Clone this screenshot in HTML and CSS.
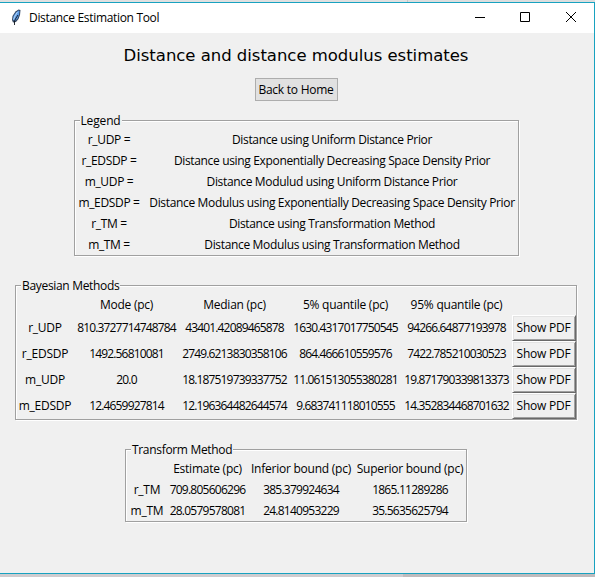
FILE: index.html
```html
<!DOCTYPE html>
<html lang="en">
<head>
<meta charset="utf-8">
<title>Distance Estimation Tool</title>
<link rel="stylesheet" href="styles.css">
</head>
<body>
<div class="backdrop-top"></div>
<main class="window">
  <header class="titlebar">
    <svg class="feather" width="12" height="18" viewBox="0 0 12 18">
      <path d="M8.500 .500 L10.500 1 L10 6 L8.500 10 L6 13 L3 13.500 L2 11 L2.500 7 L5.500 2.500 Z" fill="#33455f"/>
      <path d="M8.500 1.500 L9.500 2 L9 6 L7.500 9.500 L5 12 L3 11 L3.500 7 L6 3.500 Z" fill="#5b9ae6"/>
      <path d="M7.500 3 L5 7 L3.500 10.500" stroke="#b4d6f7" fill="none"/>
      <path d="M8 6 L6 9 L4.500 12 L4.500 16" stroke="#10151c" stroke-width=".9" fill="none"/>
    </svg>
    <span class="caption">Distance Estimation Tool</span>
    <svg class="controls" width="102" height="12" viewBox="0 0 102 12" fill="none" stroke="#000">
      <path d="M0 5.500H10"/>
      <path d="M45.500 .500h9v9h-9z"/>
      <path d="M91 0L101 10M101 0L91 10"/>
    </svg>
  </header>
  <section class="content">
    <h1>Distance and distance modulus estimates</h1>
    <button class="home">Back to Home</button>

    <section class="group legend">
      <h2>Legend</h2>
      <div>r_UDP =</div><div>Distance using Uniform Distance Prior</div>
      <div>r_EDSDP =</div><div>Distance using Exponentially Decreasing Space Density Prior</div>
      <div>m_UDP =</div><div>Distance Modulud using Uniform Distance Prior</div>
      <div>m_EDSDP =</div><div>Distance Modulus using Exponentially Decreasing Space Density Prior</div>
      <div>r_TM =</div><div>Distance using Transformation Method</div>
      <div>m_TM =</div><div>Distance Modulus using Transformation Method</div>
    </section>

    <section class="group bayes">
      <h2>Bayesian Methods</h2>
      <div></div><div>Mode (pc)</div><div>Median (pc)</div><div>5% quantile (pc)</div><div>95% quantile (pc)</div><div></div>
      <div>r_UDP</div><div class="num">810.3727714748784</div><div class="num">43401.42089465878</div><div class="num">1630.4317017750545</div><div class="num">94266.64877193978</div><button class="pdf">Show PDF</button>
      <div>r_EDSDP</div><div class="num">1492.56810081</div><div class="num">2749.6213830358106</div><div class="num">864.466610559576</div><div class="num">7422.785210030523</div><button class="pdf">Show PDF</button>
      <div>m_UDP</div><div class="num">20.0</div><div class="num">18.187519739337752</div><div class="num">11.061513055380281</div><div class="num">19.871790339813373</div><button class="pdf">Show PDF</button>
      <div>m_EDSDP</div><div class="num">12.4659927814</div><div class="num">12.196364482644574</div><div class="num">9.683741118010555</div><div class="num">14.352834468701632</div><button class="pdf">Show PDF</button>
    </section>

    <section class="group transform">
      <h2>Transform Method</h2>
      <div></div><div>Estimate (pc)</div><div>Inferior bound (pc)</div><div>Superior bound (pc)</div>
      <div>r_TM</div><div class="num">709.805606296</div><div class="num">385.379924634</div><div class="num">1865.11289286</div>
      <div>m_TM</div><div class="num">28.0579578081</div><div class="num">24.8140953229</div><div class="num">35.5635625794</div>
    </section>
  </section>
</main>
<div class="backdrop-bottom"></div>
</body>
</html>
```
FILE: styles.css
```css
* { box-sizing: border-box; }
body {
  margin: 0;
  width: 600px;
  height: 577px;
  overflow: hidden;
  background: #fff;
  color: #000;
  font: 12px/16px "Open Sans", "Noto Sans", sans-serif;
  letter-spacing: -0.24px;
}
.backdrop-top {
  width: 595px;
  height: 2px;
  background: linear-gradient(90deg, #e0e0e0 407px, #c4c8c8 407px 408px, #dcdede 408px);
}
.backdrop-bottom {
  width: 595px;
  height: 3px;
  background: linear-gradient(90deg, #cfcccf 403px, #bfbbbd 403px);
}
.window {
  width: 595px;
  height: 572px;
  border: solid #18a2c0;
  border-width: 1px 1px 1px 0;
  background: #f0f0f0;
}
.titlebar {
  display: flex;
  align-items: center;
  height: 30px;
  padding: 0 17px 0 10px;
  background: #fff;
}
.feather { margin-right: 7px; }
.caption { letter-spacing: -0.32px; }
.controls { margin-left: auto; }
.content {
  display: flex;
  flex-direction: column;
  align-items: center;
  width: 592px;
}
h1 {
  margin: 13px 0 0;
  font: 16.5px/20px "DejaVu Sans", sans-serif;
  letter-spacing: -0.03px;
}
button {
  padding: 0;
  font: inherit;
  color: inherit;
  letter-spacing: inherit;
  white-space: nowrap;
}
.home {
  width: 83px;
  height: 23px;
  margin-top: 12px;
  border: 1px solid #adadad;
  background: #e1e1e1;
}
.group {
  position: relative;
  display: grid;
  justify-items: center;
  align-items: center;
  border: 1px solid #a0a0a0;
  box-shadow: 1px 1px 0 #fff, inset 1px 1px 0 #fff;
  white-space: nowrap;
}
h2 {
  position: absolute;
  left: 5px;
  top: -8px;
  margin: 0;
  padding: 0 1px;
  background: #f0f0f0;
  font: inherit;
  letter-spacing: -0.32px;
}
.legend h2 { letter-spacing: -0.15px; }
.legend {
  width: 445px;
  height: 136px;
  margin-top: 19px;
  padding: 8px 0 0 1px;
  grid-template-columns: 67px 1fr;
  grid-auto-rows: 21px;
  letter-spacing: -0.34px;
}
.legend div:nth-of-type(even) { padding-left: 4px; }
.bayes {
  width: 562px;
  height: 135px;
  margin-top: 29px;
  padding-top: 9px;
  grid-template-columns: 58px 105px 111px 111px 111px 63px;
  grid-template-rows: 20px repeat(4, 26px);
}
.transform {
  width: 342px;
  height: 73px;
  margin-top: 29px;
  padding-top: 8px;
  grid-template-columns: 42px 79px 108px 110px;
  grid-auto-rows: 21px;
}
.num { letter-spacing: -0.84px; }
.transform .num { letter-spacing: -0.75px; }
.pdf {
  width: 64px;
  height: 26px;
  border: 1px solid;
  border-color: #fff #696969 #696969 #fff;
  box-shadow: inset 1px 1px 0 #e3e3e3, inset -1px -1px 0 #a0a0a0;
  background: #f0f0f0;
}
```
